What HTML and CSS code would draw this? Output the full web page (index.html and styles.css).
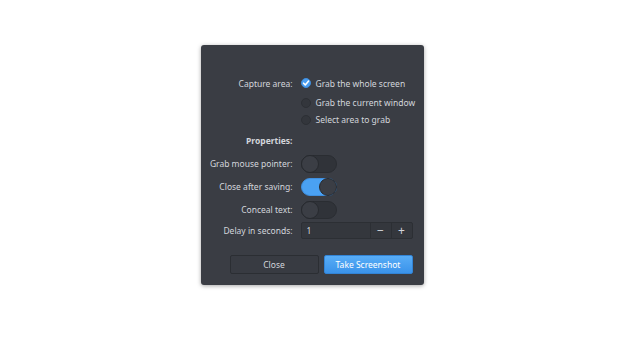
FILE: index.html
```html
<!DOCTYPE html>
<html lang="en">
<head>
    <meta charset="UTF-8">
    <meta name="viewport" content="width=device-width, initial-scale=1.0">
    <title>Screenshot</title>
    <link rel="stylesheet" href="styles.css">
</head>
<body>

<div class="dialog">
    <div class="form">
        <div class="label row-first">Capture area:</div>
        <div class="radio row-first"><span class="dot checked"><svg viewBox="0 0 10 10" width="10" height="10"><path d="M2.6 5.2 L4.3 6.9 L7.6 3.1" fill="none" stroke="#fff" stroke-width="1.6" stroke-linecap="round" stroke-linejoin="round"/></svg></span>Grab the whole screen</div>

        <div class="label row-radio"></div>
        <div class="radio row-radio"><span class="dot"></span>Grab the current window</div>

        <div class="label row-radio"></div>
        <div class="radio row-radio"><span class="dot"></span>Select area to grab</div>

        <div class="label heading">Properties:</div>
        <div class="heading"></div>

        <div class="label row-switch">Grab mouse pointer:</div>
        <div class="row-switch"><span class="switch"></span></div>

        <div class="label row-switch">Close after saving:</div>
        <div class="row-switch"><span class="switch on"></span></div>

        <div class="label row-switch">Conceal text:</div>
        <div class="row-switch"><span class="switch"></span></div>

        <div class="label row-spin">Delay in seconds:</div>
        <div class="row-spin">
            <div class="spin">
                <span class="spin-value">1</span>
                <span class="spin-btn">&minus;</span>
                <span class="spin-btn">+</span>
            </div>
        </div>
    </div>

    <div class="actions">
        <button class="btn">Close</button>
        <button class="btn primary">Take Screenshot</button>
    </div>
</div>

</body>
</html>
```

FILE: styles.css
```css
body {
    font-family: "Noto Sans", "DejaVu Sans", sans-serif;
    font-size: 8.5px;
    background-color: #ffffff;
    margin: 0;
    height: 351px;
    display: flex;
    justify-content: center;
    align-items: flex-start;
}
.dialog {
    margin-top: 45px;
    width: 223px;
    height: 240px;
    box-sizing: border-box;
    background: #3a3d44;
    border-radius: 3px;
    box-shadow: 0 1px 4px rgba(0, 0, 0, 0.35);
    color: #d3d6dc;
    padding: 29px 11px 0 10px;
}
.form {
    display: grid;
    grid-template-columns: 82px 112px;
    column-gap: 8px;
}
.label {
    display: flex;
    align-items: center;
    justify-content: flex-end;
    white-space: nowrap;
}
.row-first {
    height: 18px;
    margin-bottom: 2px;
}
.row-radio {
    height: 17px;
}
.heading {
    height: 24px;
    font-weight: bold;
}
.row-switch {
    height: 23px;
    display: flex;
    align-items: center;
}
.row-switch.label {
    justify-content: flex-end;
}
.row-spin {
    height: 17px;
    margin-top: 1px;
    display: flex;
    align-items: center;
}
.radio {
    display: flex;
    align-items: center;
    gap: 5px;
    white-space: nowrap;
}
.dot {
    flex-shrink: 0;
    width: 10px;
    height: 10px;
    box-sizing: border-box;
    border-radius: 50%;
    background: #33363c;
    border: 1px solid #2d3035;
    display: flex;
}
.dot.checked {
    background: #4a9ef0;
    border-color: #3f8cdc;
}
.dot svg {
    margin: -1px;
}
.switch {
    width: 36px;
    height: 18px;
    box-sizing: border-box;
    border-radius: 9px;
    background: #303339;
    border: 1px solid #2a2d32;
    position: relative;
    display: block;
}
.switch::after {
    content: "";
    position: absolute;
    top: -1px;
    left: -1px;
    width: 18px;
    height: 18px;
    box-sizing: border-box;
    border-radius: 50%;
    background: #3b3e45;
    border: 1px solid #272a2f;
}
.switch.on {
    background: #4aa1f3;
    border-color: #3f8fdf;
}
.switch.on::after {
    left: auto;
    right: -1px;
}
.spin {
    width: 112px;
    height: 17px;
    box-sizing: border-box;
    display: flex;
    background: #34373d;
    border: 1px solid #2c2f34;
    border-radius: 2px;
}
.spin-value {
    flex: 1;
    padding-left: 5px;
    display: flex;
    align-items: center;
}
.spin-btn {
    width: 20px;
    border-left: 1px solid #2c2f34;
    display: flex;
    align-items: center;
    justify-content: center;
    font-size: 12px;
}
.actions {
    display: flex;
    justify-content: flex-end;
    gap: 5px;
    margin-top: 16px;
}
.btn {
    width: 89px;
    height: 19px;
    font-family: inherit;
    font-size: 8.5px;
    color: #d3d6dc;
    background: #383b42;
    border: 1px solid #2b2e33;
    border-radius: 2px;
    padding: 0;
}
.btn.primary {
    color: #ffffff;
    background: linear-gradient(#58acf6, #3a93ea);
    border-color: #3284d6;
}
```
